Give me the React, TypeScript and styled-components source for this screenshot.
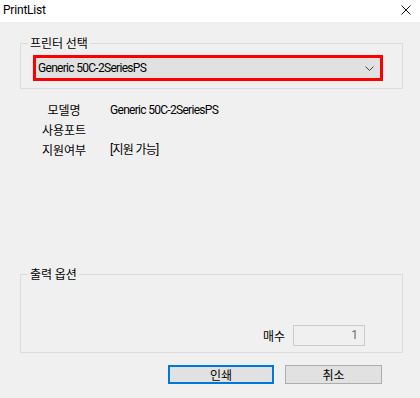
import { Component } from "react";
import styled, { createGlobalStyle } from "styled-components";


interface IInfoRow
{
    label : string
    value : string
}

const infoRows : IInfoRow[] =
[
    { label: "모델명", value: "Generic 50C-2SeriesPS" },
    { label: "사용포트", value: "" },
    { label: "지원여부", value: "[지원 가능]" },
];

const latinFont = `Roboto, "Noto Sans CJK KR", sans-serif`;

class App extends Component
{
    render() : JSX.Element
    {
        return (
            <Window>
                <GlobalStyle/>
                <TitleBar>
                    <Title>PrintList</Title>
                    <CloseIcon viewBox="0 0 10 10">
                        <path d="M0.5 0.5 L9.5 9.5 M9.5 0.5 L0.5 9.5" stroke="#111" strokeWidth="1" fill="none"/>
                    </CloseIcon>
                </TitleBar>

                <Body>
                    <Group>
                        <Legend>프린터 선택</Legend>
                        <PrinterArea>
                            <Combo>
                                <ComboText>Generic 50C-2SeriesPS</ComboText>
                                <Chevron viewBox="0 0 9 5">
                                    <path d="M0.5 0.5 L4.5 4.5 L8.5 0.5" stroke="#444" strokeWidth="1" fill="none"/>
                                </Chevron>
                            </Combo>
                        </PrinterArea>
                    </Group>

                    <InfoGrid>
                        {infoRows.map(row => (
                            <InfoRow key={row.label}>
                                <InfoLabel>{row.label}</InfoLabel>
                                <InfoValue>{row.value}</InfoValue>
                            </InfoRow>
                        ))}
                    </InfoGrid>

                    <Group $spaced>
                        <Legend>출력 옵션</Legend>
                        <OptionArea>
                            <CountLabel>매수</CountLabel>
                            <CountBox>1</CountBox>
                        </OptionArea>
                    </Group>

                    <ButtonRow>
                        <Button $primary>인쇄</Button>
                        <Button>취소</Button>
                    </ButtonRow>
                </Body>
            </Window>
        );
    }
}

const GlobalStyle = createGlobalStyle`
    html, body
    {
        margin: 0;
        padding: 0;
        background: #f0f0f0;
    }

    body
    {
        font-family: "Noto Sans CJK KR", "Noto Sans", sans-serif;
        font-size: 12px;
        color: #000;
    }
`;

const Window = styled.div`
    width: 420px;
    height: 398px;
    background: #f0f0f0;
    display: flex;
    flex-direction: column;
`;

const TitleBar = styled.div`
    height: 22px;
    background: #fff;
    display: flex;
    align-items: center;
    justify-content: space-between;
    padding: 0 9px 0 3px;
    box-sizing: border-box;
`;

const Title = styled.span`
    font-family: ${latinFont};
    font-size: 12px;
    letter-spacing: -0.2px;
    line-height: 16px;
    margin-top: -3px;
`;

const CloseIcon = styled.svg`
    width: 10px;
    height: 10px;
    margin-top: -3px;
`;

const Body = styled.div`
    display: flex;
    flex-direction: column;
    padding: 13px 17px 0 20px;
`;

const Group = styled.fieldset<{ $spaced? : boolean }>`
    margin: ${props => props.$spaced ? "107px" : "0"} 0 0 0;
    padding: 0;
    width: 383px;
    box-sizing: border-box;
    border: 1px solid #dcdcdc;
    min-width: 0;
`;

const Legend = styled.legend`
    margin-left: 7px;
    padding: 0 2px;
    line-height: 16px;
    font-size: 12px;
`;

const PrinterArea = styled.div`
    padding: 4px 19px 7px 12px;
`;

const Combo = styled.div`
    height: 26px;
    box-sizing: border-box;
    border: 3px solid #ff0000;
    background: #e1e1e1;
    display: flex;
    align-items: center;
    justify-content: space-between;
    padding: 0 6px 0 2px;
`;

const ComboText = styled.span`
    font-family: ${latinFont};
    font-size: 12px;
    letter-spacing: -0.7px;
    line-height: 16px;
`;

const Chevron = styled.svg`
    width: 9px;
    height: 5px;
`;

const InfoGrid = styled.div`
    display: flex;
    flex-direction: column;
    gap: 2px;
    margin-top: 12px;
`;

const InfoRow = styled.div`
    display: grid;
    grid-template-columns: 88px 1fr;
    column-gap: 2px;
    height: 18px;
    align-items: center;
    line-height: 18px;
`;

const InfoLabel = styled.span`
    text-align: center;
`;

const InfoValue = styled.span`
    font-family: ${latinFont};
    letter-spacing: -0.7px;
`;

const OptionArea = styled.div`
    display: flex;
    justify-content: flex-end;
    align-items: center;
    gap: 8px;
    padding: 43px 37px 6px 0;
`;

const CountLabel = styled.span`
    line-height: 16px;
`;

const CountBox = styled.div`
    width: 72px;
    height: 21px;
    box-sizing: border-box;
    border: 1px solid #cccccc;
    background: #f0f0f0;
    color: #6d6d6d;
    font-family: ${latinFont};
    text-align: right;
    padding-right: 6px;
    line-height: 19px;
`;

const ButtonRow = styled.div`
    display: flex;
    justify-content: flex-end;
    gap: 11px;
    margin-top: 12px;
    padding-right: 21px;
`;

const Button = styled.button<{ $primary? : boolean }>`
    height: 19px;
    width: ${props => props.$primary ? "106px" : "97px"};
    box-sizing: border-box;
    border: ${props => props.$primary ? "2px solid #0078d7" : "1px solid #adadad"};
    background: #e1e1e1;
    font-family: "Noto Sans CJK KR", sans-serif;
    font-size: 12px;
    line-height: 15px;
    padding: 0;
    color: #000;
`;

export default App;
